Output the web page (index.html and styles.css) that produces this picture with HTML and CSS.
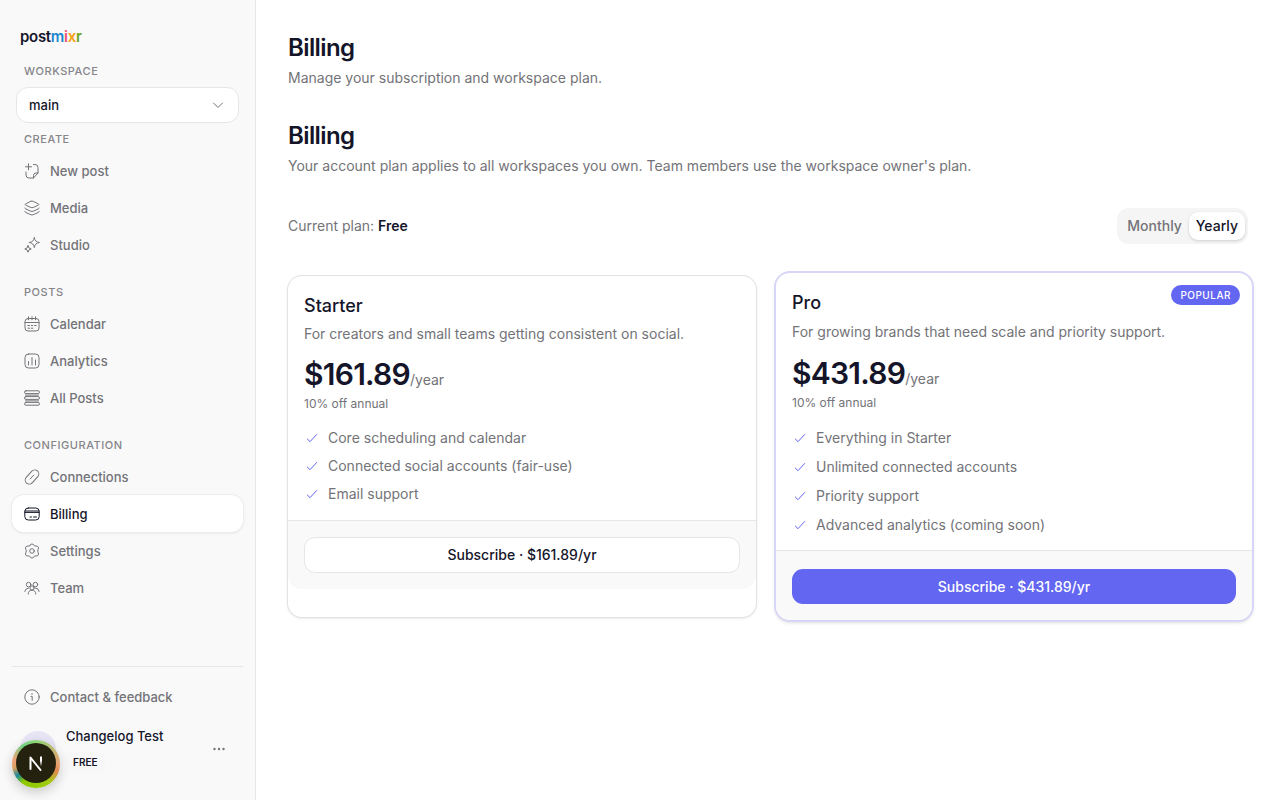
FILE: index.html
```html
<!DOCTYPE html>
<html lang="en">
    <head>
        <meta charset="UTF-8" />
        <meta name="viewport" content="width=device-width, initial-scale=1.0" />
        <title>Billing - postmixr</title>
        <link rel="stylesheet" href="styles.css">
    </head>
    <body>
        <!-- sidebar -->
        <aside class="sidebar">
            <a class="logo" href="#">post<span class="logo-m">m</span><span class="logo-i">i</span><span class="logo-x">x</span><span class="logo-r">r</span></a>
            <label class="group-label" for="workspace">WORKSPACE</label>
            <div class="select-wrap">
                <select id="workspace">
                    <option>main</option>
                </select>
                <svg class="chevron" viewBox="0 0 16 16"><path d="M3.500 6 8 10.500 12.500 6" /></svg>
            </div>

            <nav>
                <h3 class="group-label">CREATE</h3>
                <a class="nav-link" href="#">
                    <svg viewBox="0 0 16 16"><path d="M4.500 .8v6M1.500 3.800h6M9.500 1.500H11a3 3 0 0 1 3 3V10L9.500 15H5a3 3 0 0 1-3-3V9M14 10h-2a2.500 2.500 0 0 0-2.500 2.500V15" /></svg>
                    New post
                </a>
                <a class="nav-link" href="#">
                    <svg viewBox="0 0 16 16"><path d="M6.800 1.300 1.600 3.900q-1 .6 0 1.200L6.800 7.500q1.200.4 2.400 0l5.200-2.400q1-.6 0-1.200L9.200 1.300q-1.200-.5-2.400 0ZM.8 8q.2.600 1 1l5 2.200q1.200.5 2.400 0l5-2.200q.8-.4 1-1M.8 11.500q.2.600 1 1l5 2.200q1.200.5 2.400 0l5-2.200q.8-.4 1-1" /></svg>
                    Media
                </a>
                <a class="nav-link" href="#">
                    <svg viewBox="0 0 16 16"><path d="M10.300.8Q10.800 5 15.500 5.500 10.800 6 10.300 10.600 9.800 6 5.200 5.500 9.800 5 10.300.8ZM4 8.800Q4.300 11.700 7.200 12 4.300 12.300 4 15.200 3.700 12.300.8 12 3.700 11.700 4 8.800Z" /></svg>
                    Studio
                </a>

                <h3 class="group-label">POSTS</h3>
                <a class="nav-link" href="#">
                    <svg viewBox="0 0 16 16"><rect x="1" y="2.500" width="14" height="12.500" rx="3" /><path d="M1 6.500h14M4.500.8v3M11.500.8v3M8 .8v3M4 9.500h1.500M7.300 9.500h1.500M10.600 9.500h1.500M4 12.200h1.500M7.300 12.200h1.500" /></svg>
                    Calendar
                </a>
                <a class="nav-link" href="#">
                    <svg viewBox="0 0 16 16"><rect x="1" y="1" width="14" height="14" rx="3.500" /><path d="M4.500 8.500V12M8 4.500V12M11.500 7V12" /></svg>
                    Analytics
                </a>
                <a class="nav-link" href="#">
                    <svg viewBox="0 0 16 16"><rect x=".5" y=".8" width="15" height="2.800" rx="1.400" /><rect x=".5" y="6.600" width="15" height="2.800" rx="1.400" /><rect x=".5" y="12.400" width="15" height="2.800" rx="1.400" /><path d="M1.500 5.100h13M1.500 10.900h13" /></svg>
                    All Posts
                </a>

                <h3 class="group-label">CONFIGURATION</h3>
                <a class="nav-link" href="#">
                    <svg viewBox="0 0 16 16"><rect x="-.2" y="4" width="16.400" height="8" rx="4" transform="rotate(-48 8 8)" /><path d="M6.200 10 9.800 6" /></svg>
                    Connections
                </a>
                <a class="nav-link active" href="#">
                    <svg viewBox="0 0 16 16"><rect x=".8" y="2" width="14.400" height="12" rx="3.500" /><path d="M.8 5h14.400M.8 6.400h14.400M6 11h1.500M9.500 11h3" /></svg>
                    Billing
                </a>
                <a class="nav-link" href="#">
                    <svg viewBox="0 0 16 16"><path d="M6.400 1.600q1.600-1.500 3.200 0l.7 1.200 1.500.2q2.400-.2 2.800 1.900l-.6 1.800q-.5 1.300 0 2.600l.6 1.800q-.4 2.100-2.800 1.900l-1.500.2-.7 1.200q-1.600 1.500-3.200 0l-.7-1.200-1.500-.2q-2.400.2-2.800-1.900L2 9.300q.5-1.300 0-2.600l-.6-1.800Q1.800 2.800 4.200 3l1.500-.2Z" /><circle cx="8" cy="8" r="2.300" /></svg>
                    Settings
                </a>
                <a class="nav-link" href="#">
                    <svg viewBox="0 0 16 16"><circle cx="4.600" cy="4.600" r="2.300" /><circle cx="11.400" cy="4.600" r="2.300" /><circle cx="8" cy="8" r="2.100" /><path d="M4.200 14a3.800 3.800 0 0 1 7.600 0M.8 11.500A4 4 0 0 1 4.500 8M15.200 11.500A4 4 0 0 0 11.500 8" /></svg>
                    Team
                </a>
            </nav>

            <div class="sidebar-footer">
                <a class="nav-link" href="#">
                    <svg viewBox="0 0 16 16"><circle cx="8" cy="8" r="7.200" /><path d="M7 7.400h1.200v4M8 4.600v.8" /></svg>
                    Contact &amp; feedback
                </a>
                <div class="account">
                    <span class="avatar"></span>
                    <div class="account-info">
                        <div class="account-name">Changelog Test</div>
                        <span class="plan-tag">FREE</span>
                    </div>
                    <button class="more" type="button" aria-label="Account menu">
                        <svg viewBox="0 0 16 16"><circle cx="3.500" cy="8" r="1.200" /><circle cx="8" cy="8" r="1.200" /><circle cx="12.500" cy="8" r="1.200" /></svg>
                    </button>
                </div>
            </div>
        </aside>

        <!-- main content -->
        <main>
            <header class="page-head">
                <h1>Billing</h1>
                <p>Manage your subscription and workspace plan.</p>
            </header>
            <header class="page-head">
                <h2>Billing</h2>
                <p>Your account plan applies to all workspaces you own. Team members use the workspace owner's plan.</p>
            </header>

            <div class="plan-bar">
                <p>Current plan: <strong>Free</strong></p>
                <div class="toggle">
                    <button type="button">Monthly</button>
                    <button type="button" class="on">Yearly</button>
                </div>
            </div>

            <div class="plans">
                <section class="card">
                    <div class="card-body">
                        <h3>Starter</h3>
                        <p class="desc">For creators and small teams getting consistent on social.</p>
                        <div class="price">$161.89<span>/year</span></div>
                        <p class="note">10% off annual</p>
                        <ul>
                            <li><svg viewBox="0 0 16 16"><path d="M3.300 9 6 11.700 12.700 4.500" /></svg>Core scheduling and calendar</li>
                            <li><svg viewBox="0 0 16 16"><path d="M3.300 9 6 11.700 12.700 4.500" /></svg>Connected social accounts (fair-use)</li>
                            <li><svg viewBox="0 0 16 16"><path d="M3.300 9 6 11.700 12.700 4.500" /></svg>Email support</li>
                        </ul>
                    </div>
                    <div class="card-foot">
                        <button type="button" class="subscribe">Subscribe · $161.89/yr</button>
                    </div>
                </section>

                <section class="card pro">
                    <span class="badge">POPULAR</span>
                    <div class="card-body">
                        <h3>Pro</h3>
                        <p class="desc">For growing brands that need scale and priority support.</p>
                        <div class="price">$431.89<span>/year</span></div>
                        <p class="note">10% off annual</p>
                        <ul>
                            <li><svg viewBox="0 0 16 16"><path d="M3.300 9 6 11.700 12.700 4.500" /></svg>Everything in Starter</li>
                            <li><svg viewBox="0 0 16 16"><path d="M3.300 9 6 11.700 12.700 4.500" /></svg>Unlimited connected accounts</li>
                            <li><svg viewBox="0 0 16 16"><path d="M3.300 9 6 11.700 12.700 4.500" /></svg>Priority support</li>
                            <li><svg viewBox="0 0 16 16"><path d="M3.300 9 6 11.700 12.700 4.500" /></svg>Advanced analytics (coming soon)</li>
                        </ul>
                    </div>
                    <div class="card-foot">
                        <button type="button" class="subscribe">Subscribe · $431.89/yr</button>
                    </div>
                </section>
            </div>
        </main>

        <!-- floating dev button -->
        <button class="dev-button" type="button" aria-label="Dev tools">
            <svg viewBox="0 0 40 40">
                <defs>
                    <linearGradient id="fade" x1="0" y1="0" x2="0" y2="1">
                        <stop offset=".4" stop-color="#fff" />
                        <stop offset="1" stop-color="#fff" stop-opacity="0" />
                    </linearGradient>
                </defs>
                <path d="M14.500 26V14.500L24.500 27" stroke="#fff" />
                <path d="M24 13.500h2v10h-2z" fill="url(#fade)" stroke="none" />
            </svg>
        </button>
    </body>
</html>
```
FILE: styles.css
```css
* {
    margin: 0;
    padding: 0;
    box-sizing: border-box;
}
body {
    display: flex;
    min-height: 100vh;
    font-family: "Inter", "Liberation Sans", sans-serif;
    font-size: 14px;
    line-height: 20px;
    color: #737378;
    background-color: #fff;
}
a {
    color: inherit;
    text-decoration: none;
}
button,
select {
    font: inherit;
    cursor: pointer;
}
svg {
    width: 16px;
    height: 16px;
    flex: none;
    fill: none;
    stroke: currentColor;
    stroke-linecap: round;
    stroke-linejoin: round;
}

/* sidebar */
.sidebar {
    display: flex;
    flex-direction: column;
    flex: none;
    width: 256px;
    padding: 25px 12px 12px;
    background-color: #f9f9f9;
    border-right: 1px solid #e6e6e8;
    font-size: 13px;
}
.logo {
    padding: 0 8px;
    line-height: 24px;
    font-size: 15px;
    font-weight: 600;
    letter-spacing: -0.02em;
    color: #15152a;
}
.logo-m {
    color: #1a86d0;
}
.logo-i {
    color: #ee4f74;
}
.logo-x {
    color: #f5a010;
}
.logo-r {
    color: #6fa51c;
}
.group-label {
    padding: 0 12px;
    font-size: 11px;
    line-height: 16px;
    font-weight: 500;
    letter-spacing: 0.05em;
    color: #85858a;
}
.sidebar > .group-label {
    margin: 14px 0 8px;
}
.select-wrap {
    position: relative;
    margin: 0 4px 8px;
}
.select-wrap select {
    display: block;
    width: 100%;
    height: 36px;
    padding: 0 12px;
    appearance: none;
    border: 1px solid #e6e6e8;
    border-radius: 12px;
    background-color: #fff;
    font-weight: 500;
    color: #15152a;
}
.chevron {
    position: absolute;
    right: 13px;
    top: 10px;
    pointer-events: none;
}
nav .group-label {
    margin-bottom: 5px;
}
nav .nav-link + .group-label {
    margin-top: 21px;
}
.nav-link {
    display: flex;
    align-items: center;
    gap: 10px;
    height: 37px;
    padding: 0 12px;
    border-radius: 12px;
    font-weight: 500;
}
.nav-link.active {
    background-color: #fff;
    color: #15152a;
    box-shadow: 0 0 0 1px #ededef, 0 1px 3px rgba(0, 0, 0, 0.12);
}
.sidebar-footer {
    margin-top: auto;
    padding-top: 11px;
    border-top: 1px solid #e6e6e8;
}
.account {
    display: flex;
    align-items: center;
    gap: 10px;
    padding: 11px 12px 16px 8px;
}
.avatar {
    width: 36px;
    height: 36px;
    border-radius: 50%;
    background-color: #e8e6f6;
}
.account-info {
    flex: 1;
}
.account-name {
    font-weight: 500;
    color: #15152a;
}
.plan-tag {
    display: inline-block;
    margin-top: 6px;
    padding: 0 7px;
    border-radius: 8px;
    background-color: #f7f7f7;
    font-size: 10px;
    font-weight: 600;
    color: #15152a;
}
.more {
    display: flex;
    padding: 4px;
    border: none;
    background: none;
    color: #737378;
}
.more svg {
    fill: currentColor;
    stroke: none;
}

/* main */
main {
    flex: 1;
    min-width: 0;
    padding: 32px;
}
.page-head {
    margin-bottom: 32px;
}
.page-head h1,
.page-head h2 {
    margin-bottom: 4px;
    font-size: 24px;
    line-height: 32px;
    font-weight: 600;
    letter-spacing: -0.025em;
    color: #15152a;
}
.plan-bar {
    display: flex;
    align-items: center;
    justify-content: space-between;
    margin-bottom: 32px;
}
.plan-bar strong {
    font-weight: 600;
    color: #15152a;
}
.toggle {
    display: flex;
    padding: 4px 3px;
    border-radius: 12px;
    background-color: #f5f5f5;
}
.toggle button {
    height: 28px;
    padding: 0 7px;
    border: none;
    border-radius: 9px;
    background: none;
    font-weight: 500;
    color: #737378;
}
.toggle .on {
    background-color: #fff;
    color: #15152a;
    box-shadow: 0 1px 3px rgba(0, 0, 0, 0.16);
}

/* plans */
.plans {
    display: grid;
    grid-template-columns: 1fr 1fr;
    gap: 24px;
}
.card {
    position: relative;
    border-radius: 14px;
    background-color: #fff;
    box-shadow: 0 0 0 1px #e2e2e5, 0 1px 3px rgba(0, 0, 0, 0.15);
}
.card-body {
    padding: 16px;
}
.card h3 {
    margin-bottom: 4px;
    font-size: 18px;
    line-height: 28px;
    font-weight: 500;
    color: #15152a;
}
.price {
    margin: 12px 0 4px;
    font-size: 30px;
    line-height: 36px;
    font-weight: 600;
    letter-spacing: -0.025em;
    color: #15152a;
}
.price span {
    font-size: 14px;
    line-height: 20px;
    font-weight: 400;
    letter-spacing: 0;
    color: #737378;
}
.note {
    font-size: 12px;
    line-height: 16px;
}
.card ul {
    display: grid;
    gap: 8px;
    margin-top: 16px;
    list-style: none;
}
.card li {
    display: flex;
    align-items: center;
    gap: 8px;
}
.card li svg {
    color: #6366f1;
}
.card-foot {
    padding: 16px;
    border-top: 1px solid #e6e6e8;
    border-radius: 0 0 14px 14px;
    background-color: #f9f9f9;
}
.subscribe {
    width: 100%;
    height: 36px;
    border: 1px solid #e6e6e8;
    border-radius: 11px;
    background-color: #fff;
    font-weight: 500;
    color: #15152a;
}

/* highlighted plan sits a little larger than its neighbour */
.pro {
    margin: -3px -4px;
    box-shadow: 0 0 0 2px #d8d6f7, 0 2px 4px rgba(0, 0, 0, 0.2);
}
.pro .card-body {
    padding-bottom: 15px;
}
.pro h3 {
    margin-bottom: 5px;
}
.pro .price {
    margin-top: 13px;
}
.pro ul {
    gap: 9px;
    margin-top: 17px;
}
.pro .card-foot {
    padding: 18px 16px 16px;
}
.pro .subscribe {
    height: 35px;
    border: none;
    background-color: #6366f1;
    color: #fff;
}
.badge {
    position: absolute;
    top: 12px;
    right: 12px;
    padding: 0 9px;
    border-radius: 10px;
    background-color: #6366f1;
    font-size: 10px;
    font-weight: 500;
    letter-spacing: 0.05em;
    color: #fff;
}

/* dev button */
.dev-button {
    position: fixed;
    left: 12px;
    bottom: 12px;
    display: flex;
    padding: 3px 4px 5px;
    border: none;
    border-radius: 50%;
    background: conic-gradient(#8fd878, #e8a070 25%, #e08850 30%, #a0cc10 40%, #8cc800 60%, #1a8a9a 66%, #d8a060 72%, #f0a078 78%, #70d080 90%, #8fd878);
    box-shadow: 0 4px 12px rgba(0, 0, 0, 0.2);
}
.dev-button svg {
    width: 40px;
    height: 40px;
    border-radius: 50%;
    background-color: #24220f;
    stroke-width: 2;
}
```
